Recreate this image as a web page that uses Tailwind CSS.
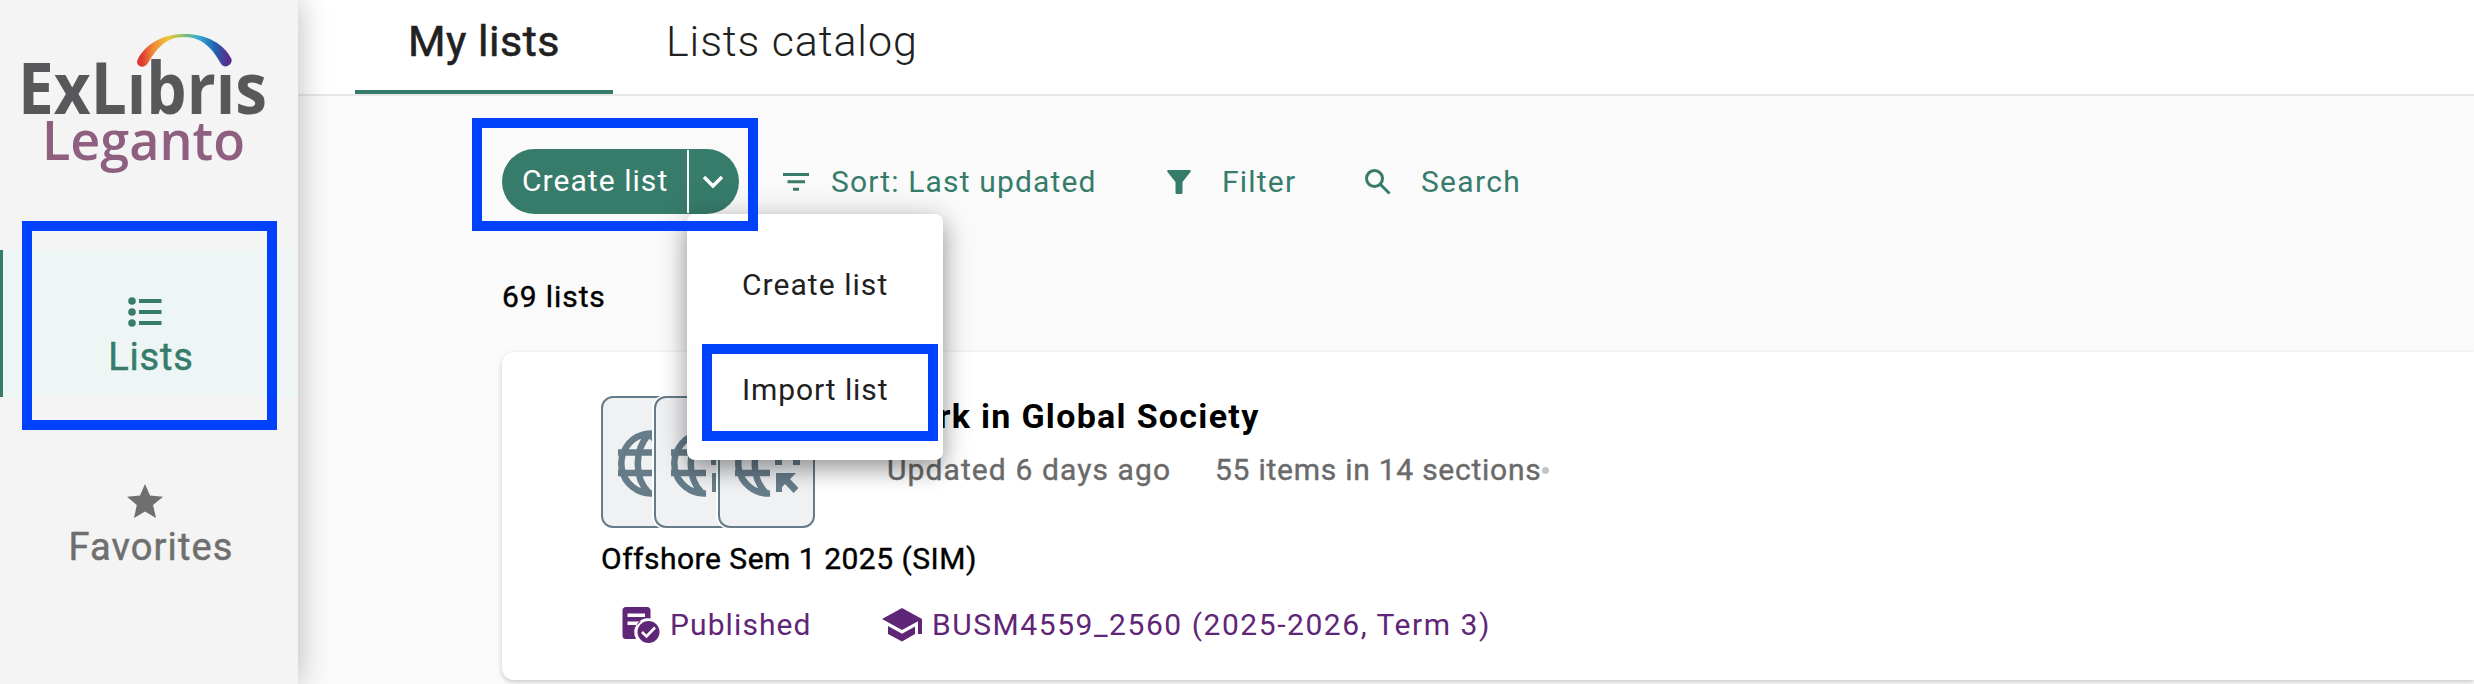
<!DOCTYPE html>
<html lang="en">
<head>
<meta charset="utf-8">
<title>Leganto - My lists</title>
<script src="https://cdn.jsdelivr.net/npm/@tailwindcss/browser@4"></script>
</head>
<body class="font-['Roboto',sans-serif] bg-[#fafafa]">
<div class="relative flex w-[2474px] h-[684px] overflow-hidden bg-[#fafafa]">
  <aside class="relative z-10 w-[298px] shrink-0 bg-[#f4f4f4] shadow-[0_0_30px_rgba(0,0,0,0.28)]">
    <div class="h-[250px]">
      <svg class="block" width="298" height="220" viewBox="0 0 298 220">
        <defs>
          <linearGradient id="rainbow" x1="137" y1="0" x2="232" y2="0" gradientUnits="userSpaceOnUse">
            <stop offset="0.05" stop-color="#dd3a32"/><stop offset="0.17" stop-color="#f08a38"/><stop offset="0.33" stop-color="#eec43c"/><stop offset="0.5" stop-color="#7fbf6e"/><stop offset="0.65" stop-color="#38a8d8"/><stop offset="0.82" stop-color="#2263b0"/><stop offset="0.95" stop-color="#55308f"/>
          </linearGradient>
        </defs>
        <path d="M137.500 60C144 46 161 34 184 34C207 34 224 44 231.500 59C233 65 224 70 220.500 63C212 48 202 37 184 37C166 37 157 48 148 63C144 70 135 66 137.500 60Z" fill="url(#rainbow)"/>
        <text x="18" y="114" textLength="249" lengthAdjust="spacingAndGlyphs" font-family="Open Sans" font-weight="700" font-size="71" fill="#58585b">ExLıbrıs</text>
        <text x="42" y="160" textLength="203" lengthAdjust="spacingAndGlyphs" font-family="Open Sans" font-weight="600" font-size="54" fill="#8e5f7f">Leganto</text>
      </svg>
    </div>
    <nav class="[-webkit-text-stroke:0.5px]">
      <a class="flex flex-col items-center h-[147px] pt-[47px] bg-[#edf6f4] border-l-[3px] border-[#377c6b] text-[#377c6b]">
        <svg class="mr-[11px] block" width="34" height="30" viewBox="0 0 34 30" fill="currentColor"><circle cx="4" cy="4" r="3.800"/><circle cx="4" cy="15" r="3.800"/><circle cx="4" cy="26" r="3.800"/><path d="M11 2h22.500v4H11zM11 13h22.500v4H11zM11 24h22.500v4H11z"/></svg>
        <span class="mt-[10px] ml-px text-[38px] leading-[40px] tracking-[0.8px]">Lists</span>
      </a>
      <a class="flex flex-col items-center pt-[87px] text-[#6f6f6f]">
        <svg class="mr-2 block" width="36" height="34" viewBox="0 0 36 34" fill="currentColor"><path d="M18 0l5 11.500L36 12.700 26 21l3 13-11-6.500L7 34l2.800-13L0 12.700l13-1.200z"/></svg>
        <span class="mt-[9px] ml-1 text-[38px] leading-[40px] tracking-[1.15px]">Favorites</span>
      </a>
    </nav>
  </aside>

  <main class="flex-1 min-w-0">
    <header class="flex h-[96px] border-b-2 border-[#e8e8e8] bg-white pl-[57px] text-[43px] leading-[82px] text-[#212121]">
      <div class="flex w-[258px] h-[94px] justify-center border-b-4 border-[#377c6b]"><span class="tracking-[0.5px] [-webkit-text-stroke:0.6px]">My lists</span></div>
      <div class="pl-[53px] font-light"><span class="tracking-[0.9px]">Lists catalog</span></div>
    </header>

    <section class="pl-[204px] pt-[53px]">
      <div class="flex items-center h-[65px] text-[30px] leading-[64px] text-[#377c6b]">
        <div class="flex h-[65px] w-[237px] rounded-full bg-[#377c6b] text-white">
          <span class="w-[185px] pl-[20px] tracking-[1.05px]">Create list</span>
          <span class="my-px flex flex-1 items-center border-l-2 border-white pl-[13px]"><svg width="22" height="14" viewBox="0 0 22 14" fill="none" stroke="currentColor" stroke-width="3.400"><path d="M2 2l9 9 9-9"/></svg></span>
        </div>
        <svg class="ml-[44px]" width="26" height="18" viewBox="0 0 26 18" fill="currentColor"><path d="M0 0h26v3H0zM4.500 7.300h17.500v3H4.500zM10 14.700h6v3h-6z"/></svg>
        <span class="ml-[22px] w-[336px] tracking-[1.15px]">Sort: Last updated</span>
        <svg width="24" height="24" viewBox="0 0 24 24" fill="currentColor"><path d="M1.500 0h21q2 0 1 2L15.500 12v10.500q0 1.500-1.500 1.500h-4q-1.500 0-1.500-1.500V12L.5 2Q-.5 0 1.500 0z"/></svg>
        <span class="ml-[31px] w-[143px] tracking-[1.2px]">Filter</span>
        <svg width="26" height="26" viewBox="0 0 26 26" fill="none" stroke="currentColor" stroke-width="3"><circle cx="9.500" cy="9.500" r="8"/><path d="M15.500 15.500l9 9"/></svg>
        <span class="ml-[30px] tracking-[1.3px]">Search</span>
      </div>

      <div class="mt-[63px] h-[75px] text-[30px] leading-[40px] text-black tracking-[0.9px] [-webkit-text-stroke:0.4px]">69 lists</div>

      <article class="h-[328px] rounded-l-xl bg-white pl-[99px] pt-[44px] shadow-[0_2px_5px_rgba(0,0,0,0.2)]">
        <div class="flex h-[132px]">
          <div class="flex w-[286px] text-[#667c89]">
            <div class="w-[53px] h-[132px] overflow-visible"><div class="w-[97px] h-[132px] rounded-xl border-2 border-[#667c89] bg-[#eff1f3]"><svg viewBox="0 0 93 128" width="93" height="128"><use href="#weblink"/></svg></div></div>
            <div class="relative w-[64px] h-[132px]"><div class="w-[97px] h-[132px] rounded-xl border-2 border-[#667c89] bg-[#eff1f3] shadow-[-1px_0_0_1px_#fff]"><svg viewBox="0 0 93 128" width="93" height="128"><use href="#weblink"/></svg></div></div>
            <div class="relative w-[97px] h-[132px] rounded-xl border-2 border-[#667c89] bg-[#eff1f3] shadow-[-1px_0_0_1px_#fff]">
              <svg viewBox="0 0 93 128" width="93" height="128">
                <g id="weblink">
                  <path d="M50 95.500A30 30 0 1 1 76 54M46 36C31 52 31 80 46 95M15 54.500H76M15 75H50M46 36Q56 44 58 54" fill="none" stroke="currentColor" stroke-width="6.500"/>
                  <path d="M55 60h7v7h-7zM73 60h7v7h-7zM56 75h20l-6 6 8.500 9-5 5-8.500-9-3 3v5h-6z" fill="currentColor"/>
                </g>
              </svg>
            </div>
          </div>
          <div>
            <h2 class="text-[34px] leading-[41px] font-bold text-black tracking-[1.3px]">Work in Global Society</h2>
            <p class="mt-[9px] flex items-center text-[30px] leading-[48px] text-[#6a6a6a] [-webkit-text-stroke:0.4px]"><span class="w-[328px] tracking-[1.1px]">Updated 6 days ago</span><span class="tracking-[0.75px]">55 items in 14 sections</span><i class="size-[7px] rounded-full bg-[#c4c4c4]"></i></p>
          </div>
        </div>
        <p class="mt-[11px] text-[30px] leading-[40px] text-black tracking-[0.5px] [-webkit-text-stroke:0.4px]">Offshore Sem 1 2025 (SIM)</p>
        <div class="mt-[26px] flex items-center pl-[21px] text-[30px] leading-[40px] text-[#5f2678]">
          <svg width="38" height="38" viewBox="0 0 38 38"><path fill="currentColor" fill-rule="evenodd" d="M4 1h21q3.500 0 3.500 3.500v8A14 14 0 0 0 14 33H4Q.5 33 .5 29.500v-25Q.5 1 4 1zM5.500 7.500v3.500H23V7.500zM5.500 15.500V19H15l4-3.500z"/><circle cx="26.500" cy="26" r="11" fill="currentColor"/><path d="M20 26l4.500 4.500L33 21.500" fill="none" stroke="#fff" stroke-width="2.600"/></svg>
          <span class="ml-[10px] w-[212px] tracking-[1.1px]">Published</span>
          <svg width="40" height="34" viewBox="0 0 40 34" fill="currentColor"><path d="M20 0l20 11v15h-4V13.200L20 22 0 11zM6 18l14 7.700L33 18.500V26l-13 7.500L6 26z"/></svg>
          <span class="ml-[10px] tracking-[1.55px]">BUSM4559_2560 (2025-2026, Term 3)</span>
        </div>
      </article>
    </section>
  </main>

  <div class="absolute z-20 left-[687px] top-[214px] flex h-[246px] w-[256px] flex-col rounded-lg bg-white pl-[55px] pt-[45px] text-[30px] leading-[52px] text-[#212121] shadow-[0_10px_20px_rgba(0,0,0,0.25),0_4px_32px_rgba(0,0,0,0.22)]">
    <div class="h-[105px] tracking-[1.05px]">Create list</div>
    <div class="tracking-[0.9px]">Import list</div>
  </div>
  <div class="absolute z-30 left-[22px] top-[221px] h-[209px] w-[255px] border-[10px] border-[#0042fc]"></div>
  <div class="absolute z-30 left-[472px] top-[118px] h-[113px] w-[286px] border-[10px] border-[#0042fc]"></div>
  <div class="absolute z-30 left-[702px] top-[344px] h-[97px] w-[236px] border-[10px] border-[#0042fc]"></div>
</div>
</body>
</html>
